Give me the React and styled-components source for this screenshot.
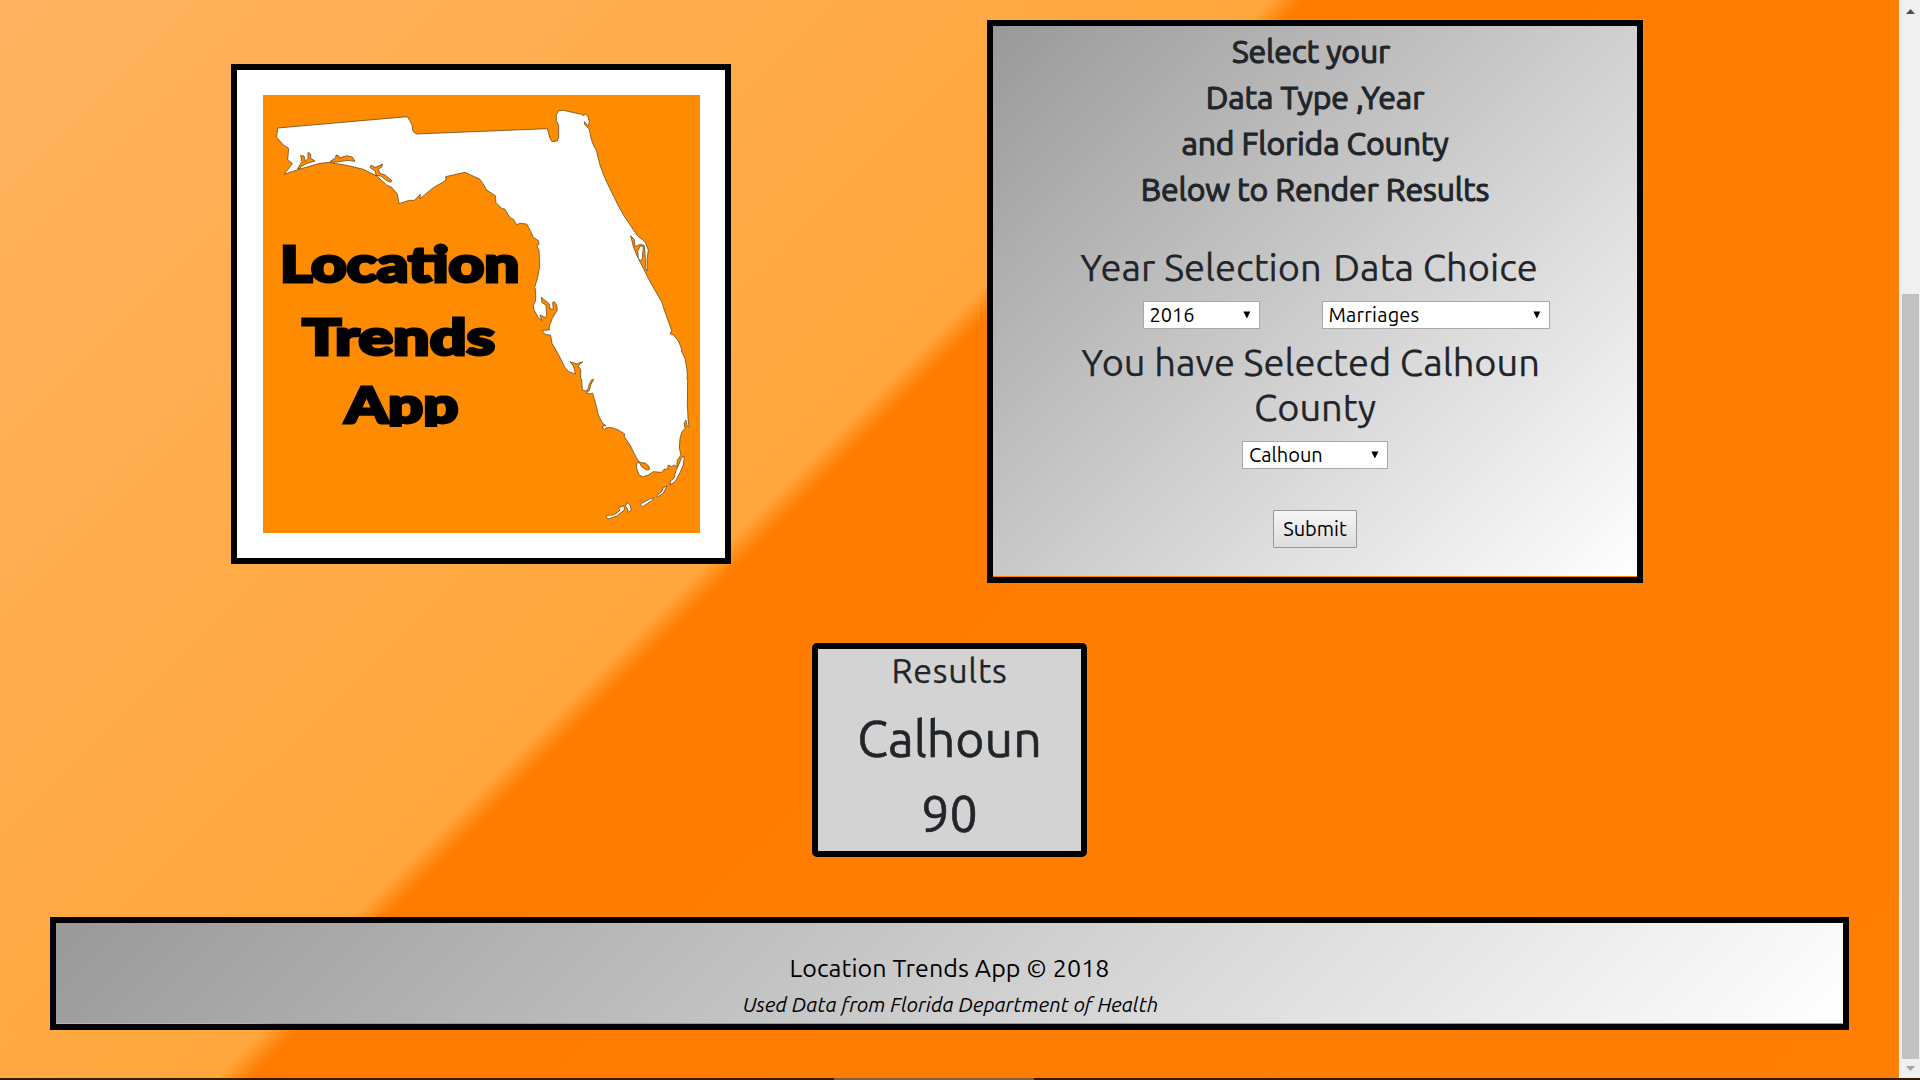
import React from "react";
import styled, { createGlobalStyle } from "styled-components";

const GlobalStyle = createGlobalStyle`
  *, *::before, *::after { box-sizing: border-box; }
  html, body { margin: 0; padding: 0; overflow: hidden; }
  body { font-family: Ubuntu, "Noto Sans", "Open Sans", sans-serif; color: #212529; }
`;

const Screen = styled.div`
  width: 1920px;
  height: 1080px;
  display: flex;
  flex-direction: column;
  overflow: hidden;
`;

const Viewport = styled.div`
  height: 1078px;
  display: flex;
`;

const Page = styled.div`
  width: 1899px;
  height: 1078px;
  background: linear-gradient(135deg, #ffb76b 0%, #ffa73d 50%, #ff7c00 51%, #ff7f04 100%) 0 -392px / 1899px 1472px no-repeat;
`;

const Content = styled.main`
  height: 1030px;
  background: linear-gradient(135deg, #ffb76b 0%, #ffa73d 50%, #ff7c00 51%, #ff7f04 100%) 0 -392px / 1899px 1424px no-repeat;
`;

const Columns = styled.section`
  display: flex;
  justify-content: space-between;
  align-items: flex-start;
  padding: 20px 256px 0 231px;
`;

const LogoCard = styled.div`
  width: 500px;
  height: 500px;
  margin-top: 44px;
  padding: 25px 25px 25px 26px;
  border: 6px solid #000;
  background: #fff;
`;

const LogoArt = styled.svg`
  display: block;
  width: 437px;
  height: 438px;
  background: #ff8c00;
`;

const LogoText = styled.text`
  font-family: Broadway, Lato, sans-serif;
  font-weight: 900;
  font-size: 147px;
  fill: #000;
  stroke: #000;
  stroke-width: 9px;
`;

const FormCard = styled.form`
  width: 656px;
  height: 563px;
  display: flex;
  flex-direction: column;
  align-items: center;
  border: 6px solid #000;
  padding-bottom: 1px;
  background: linear-gradient(135deg, #999999 0%, #ffffff 100%) content-box;
`;

const Intro = styled.div`
  padding-top: 2px;
  text-align: center;
`;

const IntroLine = styled.div`
  font-size: 32px;
  line-height: 46px;
  letter-spacing: -0.16px;
  margin-left: ${(p) => p.$shift || 0}px;
  -webkit-text-stroke: 1.1px #212529;
`;

const Choices = styled.div`
  display: grid;
  grid-template-columns: 241px 228px;
  justify-items: center;
  row-gap: 12px;
  margin-top: 33px;
`;

const Label = styled.label`
  font-size: 38px;
  line-height: 44px;
  white-space: nowrap;
  -webkit-text-stroke: 0.25px #212529;
`;

const SelectBox = styled.button`
  width: ${(p) => p.$width}px;
  height: 28px;
  display: flex;
  align-items: center;
  justify-content: space-between;
  padding: 0 8px 0 6px;
  border: 1px solid #a9a9a9;
  border-radius: 0;
  background: #fff;
  color: #000;
  font: 20px/26px Ubuntu, "Noto Sans", sans-serif;
  letter-spacing: ${(p) => p.$ls}px;
`;

const Selected = styled.div`
  width: 520px;
  margin-top: 11px;
  font-size: 38px;
  line-height: 45px;
  text-align: center;
  white-space: pre;
  -webkit-text-stroke: 0.25px #212529;
`;

const CountyRow = styled.div`
  margin-top: 11px;
`;

const Submit = styled.button`
  width: 84px;
  height: 38px;
  margin-top: 41px;
  padding: 0;
  border: 1px solid #999;
  border-radius: 1px;
  background: linear-gradient(#f6f6f6, #dddddd);
  color: #000;
  font: 20px/36px Ubuntu, "Noto Sans", sans-serif;
`;

const Results = styled.section`
  width: 275px;
  height: 214px;
  margin: 0 auto;
  border: 6px solid #000;
  border-radius: 5px;
  background: #d3d3d3;
  text-align: center;
`;

const ResultsRow = styled.div`
  padding: 60px 0;
`;

const ResultsTitle = styled.h3`
  margin: 0;
  padding: 1px 0 11px;
  font-size: 34px;
  font-weight: 400;
  line-height: 40px;
  letter-spacing: 0.7px;
  -webkit-text-stroke: 0.25px #212529;
`;

const ResultValue = styled.div`
  font-size: 50px;
  line-height: 75px;
  -webkit-text-stroke: 0.6px #212529;
`;

const Footer = styled.footer`
  height: 113px;
  margin: 0 50px;
  border: 6px solid #000;
  padding-bottom: 1px;
  background: linear-gradient(135deg, #999999 0%, #ffffff 100%) content-box;
  color: #000;
  text-align: center;
`;

const Copyright = styled.div`
  padding-top: 27px;
  font-size: 25px;
  line-height: 37px;
  letter-spacing: 0.08px;
`;

const Source = styled.div`
  margin: 3px 0 0 2px;
  font-size: 20.5px;
  font-style: italic;
  line-height: 30px;
  letter-spacing: 0.08px;
`;

const Scrollbar = styled.div`
  width: 21px;
  height: 1078px;
  display: flex;
  flex-direction: column;
  align-items: center;
  justify-content: space-between;
  padding: 9px 1px 7px 1px;
  background: #f0f0f0;
  border-left: 1px solid #fafafa;
`;

const Thumb = styled.div`
  width: 17px;
  height: 765px;
  margin-top: 273px;
  background: #c1c1c1;
`;

const Taskbar = styled.div`
  height: 2px;
  display: flex;
  padding-left: 834px;
  background: #331a04;
`;

const TaskbarActive = styled.div`
  width: 200px;
  background: #7a6048;
`;

const FLORIDA =
  "M173,234 L562,200 L570,213 L576,225 L579,244 L589,252 L982,236 L990,265 L996,275 L1012,273 L1016,262 L1016,226 L1009,212 L1009,194 L1017,182 L1030,181 L1084,193 L1090,197 L1096,193 L1103,197 L1108,215 L1105,228 L1093,215 L1094,224 L1108,238 L1113,265 L1120,285 L1129,301 L1140,345 L1150,373 L1162,400 L1180,437 L1195,467 L1210,494 L1235,532 L1253,558 L1275,575 L1285,600 L1281,630 L1281,663 L1276,655 L1276,625 L1274,595 L1272,586 L1262,583 L1245,590 L1243,568 L1232,557 L1240,590 L1250,615 L1270,655 L1290,695 L1325,755 L1333,780 L1355,842 L1350,851 L1360,855 L1375,872 L1386,900 L1384,903 L1395,925 L1401,960 L1402,982 L1400,985 L1403,990 L1402,1060 L1404,1105 L1407,1130 L1402,1130 L1398,1110 L1393,1118 L1395,1135 L1386,1145 L1380,1165 L1378,1195 L1383,1215 L1372,1230 L1370,1250 L1362,1245 L1355,1250 L1345,1245 L1343,1257 L1332,1258 L1325,1267 L1300,1265 L1285,1275 L1268,1280 L1257,1275 L1250,1255 L1250,1240 L1257,1237 L1265,1250 L1280,1260 L1289,1258 L1286,1248 L1277,1240 L1260,1237 L1250,1225 L1240,1205 L1230,1185 L1213,1160 L1214,1152 L1195,1140 L1175,1133 L1160,1133 L1153,1138 L1147,1135 L1149,1128 L1158,1127 L1150,1122 L1145,1115 L1135,1095 L1128,1065 L1122,1045 L1118,1030 L1110,1032 L1098,1028 L1108,1022 L1112,1005 L1121,988 L1114,990 L1108,1003 L1104,1016 L1097,1023 L1087,1020 L1085,990 L1082,985 L1082,958 L1074,948 L1088,936 L1078,938 L1070,942 L1050,935 L1060,948 L1067,972 L1048,966 L1035,953 L1015,913 L996,880 L992,856 L975,853 L966,841 L988,840 L988,828 L997,805 L1012,780 L1010,765 L1003,755 L998,757 L1000,777 L990,777 L988,762 L964,742 L966,758 L978,765 L980,795 L976,803 L960,795 L965,812 L955,803 L942,780 L940,768 L947,750 L947,720 L944,712 L953,682 L959,650 L957,600 L950,587 L957,583 L955,572 L940,562 L930,540 L920,522 L900,520 L890,524 L880,508 L870,503 L855,478 L845,475 L828,458 L826,437 L800,420 L788,400 L780,388 L735,367 L677,380 L678,391 L640,413 L600,446 L601,433 L583,451 L568,451 L537,461 L532,432 L515,412 L500,405 L470,378 L430,358 L380,346 L342,340 L330,337 L300,340 L240,357 L192,373 L205,357 L217,340 L203,330 L206,295 L190,285 L170,262 Z";

const INLETS = [
  "M232,357 L246,335 L242,317 L252,318 L256,335 L264,325 L264,307 L272,312 L272,325 L285,333 L262,340 L242,350 L240,356 Z",
  "M330,335 L347,323 L348,315 L357,318 L358,324 L380,317 L397,321 L405,334 L385,331 L342,337 Z",
  "M468,376 L466,364 L450,352 L453,346 L467,352 L480,346 L487,342 L486,350 L475,357 L480,370 L495,375 L516,392 L512,397 L497,390 L483,378 Z",
];

const ISLANDS = [
  "M1262,587 L1270,590 L1267,625 L1262,632 L1255,625 L1253,603 Z",
  "M1393,1220 L1390,1245 L1380,1268 L1365,1295 L1350,1305 L1352,1292 L1362,1285 L1368,1262 L1376,1245 L1385,1222 Z",
  "M1341,1308 L1330,1330 L1312,1341 L1309,1338 L1325,1325 L1330,1313 Z",
  "M1300,1343 L1298,1350 L1268,1370 L1261,1365 L1265,1360 L1290,1347 Z",
  "M1220,1357 L1230,1365 L1234,1380 L1225,1387 L1222,1375 L1217,1370 Z",
  "M1212,1367 L1213,1380 L1190,1398 L1165,1407 L1159,1402 L1162,1396 L1180,1395 L1192,1388 L1200,1380 L1195,1373 Z",
];

function Logo() {
  return (
    <LogoArt viewBox="129 135 1311 1314" preserveAspectRatio="none">
      <defs>
        <clipPath id="baseline">
          <rect x="300" y="980" width="500" height="151" />
        </clipPath>
      </defs>
      <g stroke="#6b4a1c" strokeWidth="2.4" strokeLinejoin="round">
        <path d={FLORIDA} fill="#fff" />
        {INLETS.map((d) => (
          <path key={d} d={d} fill="#ff8c00" />
        ))}
        {ISLANDS.map((d) => (
          <path key={d} d={d} fill="#fff" />
        ))}
      </g>
      <LogoText x="180" y="695" textLength="718" lengthAdjust="spacingAndGlyphs">Location</LogoText>
      <LogoText x="247" y="914" textLength="578" lengthAdjust="spacingAndGlyphs">Trends</LogoText>
      <g clipPath="url(#baseline)">
        <LogoText x="375" y="1120" textLength="340" lengthAdjust="spacingAndGlyphs">App</LogoText>
      </g>
    </LogoArt>
  );
}

function Select({ width, ls = 0, value }) {
  return (
    <SelectBox type="button" $width={width} $ls={ls}>
      <span>{value}</span>
      <svg width="8" height="8" viewBox="0 0 8 8">
        <path d="M0.4,0.6 H7.4 L3.9,7.4 Z" fill="#000" />
      </svg>
    </SelectBox>
  );
}

export default function App() {
  return (
    <Screen>
      <GlobalStyle />
      <Viewport>
        <Page>
          <Content>
            <Columns>
              <LogoCard>
                <Logo />
              </LogoCard>
              <FormCard>
                <Intro>
                  <IntroLine $shift={-8}>Select your</IntroLine>
                  <IntroLine>Data Type ,Year</IntroLine>
                  <IntroLine>and Florida County</IntroLine>
                  <IntroLine>Below to Render Results</IntroLine>
                </Intro>
                <Choices>
                  <Label>Year Selection</Label>
                  <Label>Data Choice</Label>
                  <Select width={117} value="2016" />
                  <Select width={228} ls={0.2} value="Marriages" />
                </Choices>
                <Selected>
                  {"You have Selected Calhoun "}
                  <br />
                  County
                </Selected>
                <CountyRow>
                  <Select width={146} value="Calhoun" />
                </CountyRow>
                <Submit type="button">Submit</Submit>
              </FormCard>
            </Columns>
            <ResultsRow>
              <Results>
                <ResultsTitle>Results</ResultsTitle>
                <ResultValue>Calhoun</ResultValue>
                <ResultValue>90</ResultValue>
              </Results>
            </ResultsRow>
            <Footer>
              <Copyright>Location Trends App © 2018</Copyright>
              <Source>Used Data from Florida Department of Health</Source>
            </Footer>
          </Content>
        </Page>
        <Scrollbar>
          <svg width="9" height="5" viewBox="0 0 9 5">
            <path d="M4.5,0 L9,5 H0 Z" fill="#505050" />
          </svg>
          <Thumb />
          <svg width="9" height="5" viewBox="0 0 9 5">
            <path d="M0,0 H9 L4.5,5 Z" fill="#a3a3a3" />
          </svg>
        </Scrollbar>
      </Viewport>
      <Taskbar>
        <TaskbarActive />
      </Taskbar>
    </Screen>
  );
}
